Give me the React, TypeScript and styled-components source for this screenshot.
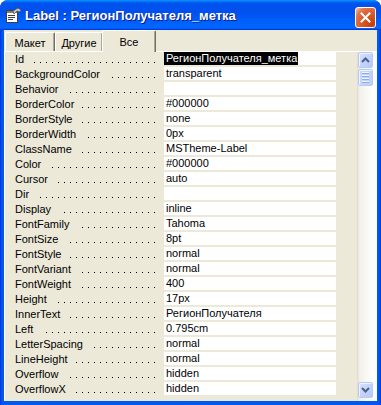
import React from "react";
import styled, { createGlobalStyle } from "styled-components";

const GlobalStyle = createGlobalStyle`
  html, body {
    margin: 0;
    padding: 0;
    background: #ffffff;
  }
  * {
    box-sizing: border-box;
  }
`;

const FONT = `"Liberation Sans", Arial, sans-serif`;
const FACE = "#ECE9D8";

const ROWS: { name: string; value: string }[] = [
  { name: "Id", value: "РегионПолучателя_метка" },
  { name: "BackgroundColor", value: "transparent" },
  { name: "Behavior", value: "" },
  { name: "BorderColor", value: "#000000" },
  { name: "BorderStyle", value: "none" },
  { name: "BorderWidth", value: "0px" },
  { name: "ClassName", value: "MSTheme-Label" },
  { name: "Color", value: "#000000" },
  { name: "Cursor", value: "auto" },
  { name: "Dir", value: "" },
  { name: "Display", value: "inline" },
  { name: "FontFamily", value: "Tahoma" },
  { name: "FontSize", value: "8pt" },
  { name: "FontStyle", value: "normal" },
  { name: "FontVariant", value: "normal" },
  { name: "FontWeight", value: "400" },
  { name: "Height", value: "17px" },
  { name: "InnerText", value: "РегионПолучателя" },
  { name: "Left", value: "0.795cm" },
  { name: "LetterSpacing", value: "normal" },
  { name: "LineHeight", value: "normal" },
  { name: "Overflow", value: "hidden" },
  { name: "OverflowX", value: "hidden" },
];

const TABS = ["Макет", "Другие", "Все"];
const TAB_WIDTHS = [50, 48, 54];

// leader dots: every 6px, right aligned so all rows share one grid
const DOTS = Array.from({ length: 25 }, (_, i) => 5 + i * 6);

const Window = styled.div`
  width: 381px;
  height: 405px;
  display: flex;
  flex-direction: column;
  background: #0054e3;
  border-radius: 8px 8px 0 0;
  overflow: hidden;
  font-family: ${FONT};
`;

const TitleBar = styled.div`
  height: 30px;
  flex: none;
  display: flex;
  align-items: center;
  padding: 0 5px 0 5px;
  background: linear-gradient(
    to bottom,
    #0997ff 0%,
    #0053ee 10%,
    #0050ee 40%,
    #0066ff 86%,
    #0066ff 92%,
    #005bff 95%,
    #003dd7 97%,
    #003dd7 100%
  );
`;

const TitleText = styled.span`
  flex: 1;
  margin-left: 3px;
  padding-top: 1px;
  color: #ffffff;
  font-weight: bold;
  font-size: 13px;
  letter-spacing: 0;
  text-shadow: 1px 1px 0 #0a1883;
  white-space: nowrap;
`;

const CloseButton = styled.div`
  width: 21px;
  height: 21px;
  margin-top: 4px;
  border: 1px solid #ffffff;
  border-radius: 3px;
  display: flex;
  align-items: center;
  justify-content: center;
  background: radial-gradient(
    circle at 85% 85%,
    #c43f0c 0%,
    #dc5a2a 50%,
    #e2744a 75%,
    #f3b49a 95%
  );
`;

const Frame = styled.div`
  flex: 1;
  display: flex;
  padding: 0 4px 4px 4px;
  background: linear-gradient(to right, #0831d9 0, #0058ee 2px, #0058ee calc(100% - 2px), #0831d9 100%);
  min-height: 0;
`;

const Content = styled.div`
  flex: 1;
  display: flex;
  flex-direction: column;
  background: ${FACE};
  min-width: 0;
`;

const TabStrip = styled.div`
  height: 21px;
  flex: none;
  display: flex;
  align-items: flex-end;
  padding-left: 1px;
  position: relative;
  z-index: 1;
`;

const Tab = styled.div<{ $active?: boolean; $width: number }>`
  width: ${(p) => p.$width}px;
  height: ${(p) => (p.$active ? 22 : 19)}px;
  margin-bottom: ${(p) => (p.$active ? -1 : 0)}px;
  margin-left: ${(p) => (p.$active ? -1 : 0)}px;
  background: ${FACE};
  border-top: 1px solid #ffffff;
  border-left: 1px solid #ffffff;
  border-right: 1px solid #716f64;
  box-shadow: inset -1px 0 0 #aca899;
  border-radius: 2px 2px 0 0;
  display: flex;
  justify-content: center;
  padding-top: ${(p) => (p.$active ? 5 : 4)}px;
  font-size: 11px;
  color: #000000;
  white-space: nowrap;
`;

const Panel = styled.div`
  flex: 1;
  display: flex;
  border-top: 1px solid #ffffff;
  border-left: 1px solid #ffffff;
  min-height: 0;
`;

const Rows = styled.div`
  display: flex;
  flex-direction: column;
`;

const Row = styled.div`
  height: 15px;
  display: flex;
  font-size: 11px;
  color: #000000;
`;

const NameCell = styled.div`
  width: 150px;
  height: 15px;
  display: flex;
`;

const NameText = styled.span`
  flex: none;
  height: 15px;
  line-height: 14px;
  padding: 0 8px 0 10px;
  white-space: nowrap;
`;

const Leader = styled.div`
  flex: 1;
  min-width: 0;
  display: flex;
  justify-content: flex-end;
  overflow: hidden;

  svg {
    flex: none;
    display: block;
  }
`;

const ValueCell = styled.div`
  width: 172px;
  height: 13px;
  margin-left: 9px;
  background: #ffffff;
  line-height: 13px;
  white-space: nowrap;
  overflow: hidden;
`;

const ValueText = styled.span<{ $selected?: boolean }>`
  display: inline-block;
  height: 13px;
  padding: 0 1px 0 2px;
  background: ${(p) => (p.$selected ? "#000000" : "transparent")};
  color: ${(p) => (p.$selected ? "#ffffff" : "#000000")};
`;

const Spacer = styled.div`
  flex: 1;
`;

const ScrollTrack = styled.div`
  width: 20px;
  display: flex;
  flex-direction: column;
  padding-bottom: 3px;
  background: linear-gradient(to right, #e9e7dc 0, #f3f1ea 2px, #fdfdfb 70%, #ffffff 100%);
  border-left: 1px solid #e2dfd2;
`;

const ScrollButton = styled.div<{ $grow?: boolean }>`
  width: 15px;
  height: 16px;
  margin-top: ${(p) => (p.$grow ? "auto" : "0")};
  border: 1px solid #b8cbf6;
  border-radius: 2px;
  background: linear-gradient(135deg, #d9e3fd 0%, #c4d3fc 50%, #b6c9f8 100%);
  box-shadow: inset 1px 1px 0 #eef3ff;
  display: flex;
  align-items: center;
  justify-content: center;
`;

const Thumb = styled.div`
  width: 15px;
  height: 17px;
  margin-top: 1px;
  border: 1px solid #b8cbf6;
  border-radius: 2px;
  background: linear-gradient(to right, #c9d8fc 0%, #bccefa 100%);
  box-shadow: inset 1px 1px 0 #eef3ff;
  display: flex;
  flex-direction: column;
  align-items: center;
  justify-content: center;
  gap: 1px;
`;

const Grip = styled.div`
  width: 7px;
  height: 1px;
  background: #eef4fe;
  box-shadow: 0 1px 0 #8caae6;
  margin-bottom: 1px;
`;

const Dots = () => (
  <svg width="150" height="15" viewBox="0 0 150 15" shapeRendering="crispEdges">
    {DOTS.map((x) => (
      <rect key={x} x={x} y={10} width={1} height={1} fill="#000000" />
    ))}
  </svg>
);

const FormIcon = () => (
  <svg width="17" height="17" viewBox="0 0 17 17">
    <rect x="1.5" y="3.5" width="11" height="12" fill="#ffffff" stroke="#404040" />
    <rect x="2" y="4" width="10" height="2" fill="#7c7c7c" />
    <line x1="3" y1="8.5" x2="10" y2="8.5" stroke="#404040" />
    <line x1="3" y1="10.5" x2="10" y2="10.5" stroke="#404040" />
    <line x1="3" y1="12.5" x2="8" y2="12.5" stroke="#404040" />
    <path d="M8 4 L13 1 L16 3 L15 5 L12 4 L9 7 Z" fill="#c9c9c9" stroke="#505050" strokeWidth="0.8" />
  </svg>
);

const CloseX = () => (
  <svg width="11" height="11" viewBox="0 0 11 11">
    <path d="M1.5 1.5 L9.5 9.5 M9.5 1.5 L1.5 9.5" stroke="#ffffff" strokeWidth="2" strokeLinecap="square" />
  </svg>
);

const Chevron = ({ up }: { up?: boolean }) => (
  <svg width="9" height="6" viewBox="0 0 9 6">
    <path
      d={up ? "M1 5 L4.5 1.5 L8 5" : "M1 1 L4.5 4.5 L8 1"}
      fill="none"
      stroke="#4d6185"
      strokeWidth="2"
    />
  </svg>
);

export default function App() {
  return (
    <>
      <GlobalStyle />
      <Window>
        <TitleBar>
          <FormIcon />
          <TitleText>Label : РегионПолучателя_метка</TitleText>
          <CloseButton>
            <CloseX />
          </CloseButton>
        </TitleBar>
        <Frame>
          <Content>
            <TabStrip>
              {TABS.map((t, i) => (
                <Tab key={t} $width={TAB_WIDTHS[i]} $active={i === 2}>
                  {t}
                </Tab>
              ))}
            </TabStrip>
            <Panel>
              <Rows>
                {ROWS.map((r, i) => (
                  <Row key={r.name}>
                    <NameCell>
                      <NameText>{r.name}</NameText>
                      <Leader>
                        <Dots />
                      </Leader>
                    </NameCell>
                    <ValueCell>
                      {r.value && <ValueText $selected={i === 0}>{r.value}</ValueText>}
                    </ValueCell>
                  </Row>
                ))}
              </Rows>
              <Spacer />
              <ScrollTrack>
                <ScrollButton>
                  <Chevron up />
                </ScrollButton>
                <Thumb>
                  <Grip />
                  <Grip />
                  <Grip />
                  <Grip />
                </Thumb>
                <ScrollButton $grow>
                  <Chevron />
                </ScrollButton>
              </ScrollTrack>
            </Panel>
          </Content>
        </Frame>
      </Window>
    </>
  );
}
